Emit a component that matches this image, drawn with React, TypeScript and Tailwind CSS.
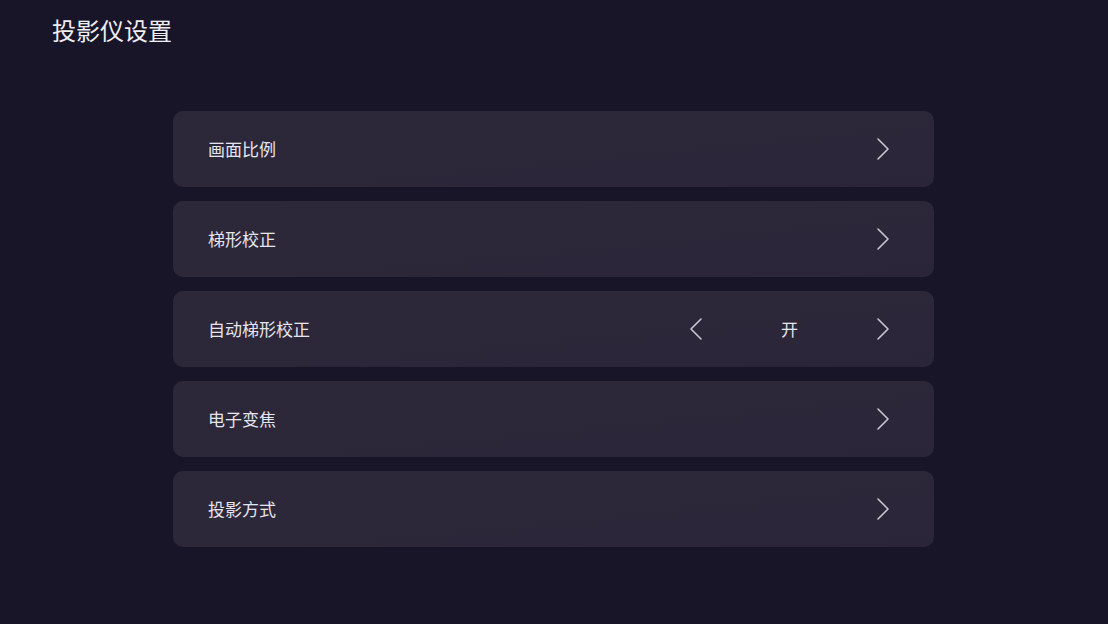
import React from "react";

const FONT = { fontFamily: '"Noto Sans CJK SC", "Noto Sans", sans-serif' };

const Chevron = ({ dir = "right" }: { dir?: "left" | "right" }) => (
  <svg width="14" height="24" viewBox="0 0 14 24" fill="none" className="text-[#c9c6d2]">
    <path
      d={dir === "right" ? "M2 2l10 10-10 10" : "M12 2L2 12l10 10"}
      stroke="currentColor"
      strokeWidth="1.6"
      strokeLinecap="round"
      strokeLinejoin="round"
    />
  </svg>
);

const rows = [
  { label: "画面比例" },
  { label: "梯形校正" },
  { label: "自动梯形校正", value: "开" },
  { label: "电子变焦" },
  { label: "投影方式" },
];

export default function App() {
  return (
    <div className="w-[1108px] h-[624px] bg-[#191528] text-white overflow-hidden" style={FONT}>
      <div className="pl-[52px] pt-[13px] text-[24px] leading-[34px] text-[#eeedf2]">投影仪设置</div>
      <div className="mt-[64px] ml-[173px] w-[761px] flex flex-col gap-[14px]">
        {rows.map((r) => (
          <div
            key={r.label}
            className="h-[76px] rounded-[10px] bg-gradient-to-br from-[#2d2839] to-[#2a2538] flex items-center pl-[35px] pr-[44px]"
          >
            <span className="text-[17px] text-[#e6e4ec] flex-1">{r.label}</span>
            {r.value ? (
              <div className="flex items-center">
                <Chevron dir="left" />
                <span className="w-[173px] text-center text-[17px] text-[#e6e4ec]">{r.value}</span>
                <Chevron />
              </div>
            ) : (
              <Chevron />
            )}
          </div>
        ))}
      </div>
    </div>
  );
}
